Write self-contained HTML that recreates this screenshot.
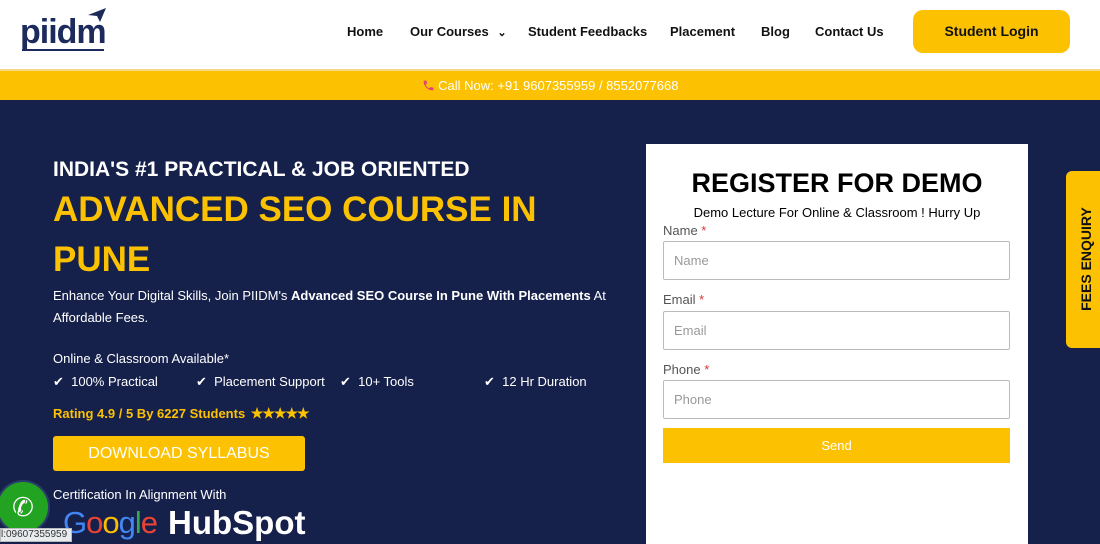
<!DOCTYPE html>
<html><head><style>
*{margin:0;padding:0;box-sizing:border-box}
body{width:1100px;height:540px;overflow:hidden;font-family:"Liberation Sans",sans-serif;background:#16214b;position:relative}
.hdr{position:absolute;top:0;left:0;width:1100px;height:69px;background:#fff}
.nav a{position:absolute;top:24px;font-weight:bold;font-size:13px;color:#111;text-decoration:none}
.login{position:absolute;left:913px;top:10px;width:157px;height:43px;background:#fcc201;border-radius:10px;font-weight:bold;font-size:14px;color:#111;text-align:center;line-height:43px}
.bar{position:absolute;top:69px;left:0;width:1100px;height:31px;background:#fcc201;border-top:2px solid #f5d88a;color:#fff;font-size:13px;text-align:center;line-height:30px}
.t{position:absolute;color:#fff}
.y{color:#fcc201}
.form{position:absolute;left:646px;top:144px;width:382px;height:400px;background:#fff}
.lbl{position:absolute;left:17px;font-size:13px;color:#555}
.lbl b{color:#d33;font-weight:normal}
.inp{position:absolute;left:17px;width:347px;height:39px;border:1px solid #bbb;border-radius:2px;font-size:13px;color:#999;padding:11px 10px}
.fees{position:absolute;left:1066px;top:171px;width:40px;height:177px;background:#fcc201;border-radius:6px 0 0 6px}
.fees span{position:absolute;left:20px;top:88px;transform:translate(-50%,-50%) rotate(-90deg);white-space:nowrap;font-weight:bold;font-size:14px;color:#111}
</style></head><body>
<div class="hdr">
 <div style="position:absolute;left:20px;top:17px;font-weight:bold;font-size:34px;color:#1c2a5c;letter-spacing:-1px;line-height:30px">piidm</div>
 <div style="position:absolute;left:22px;top:49px;width:82px;height:2px;background:#1c2a5c"></div>
 <svg style="position:absolute;left:88px;top:8px" width="18" height="14"><path d="M0 7 L18 0 L12 14 L9 8Z" fill="#1c2a5c"/></svg>
 <div class="nav">
  <a style="left:347px">Home</a><a style="left:410px">Our Courses <span style="font-size:11px;margin-left:5px">⌄</span></a><a style="left:528px">Student Feedbacks</a><a style="left:670px">Placement</a><a style="left:761px">Blog</a><a style="left:815px">Contact Us</a>
 </div>
 <div class="login">Student Login</div>
</div>
<div class="bar"><svg width="13" height="13" viewBox="0 0 24 24" style="vertical-align:-2px"><path d="M6.6 10.8c1.4 2.8 3.8 5.1 6.6 6.6l2.2-2.2c.3-.3.7-.4 1-.2 1.1.4 2.3.6 3.6.6.6 0 1 .4 1 1V20c0 .6-.4 1-1 1C10.6 21 3 13.4 3 4c0-.6.4-1 1-1h3.5c.6 0 1 .4 1 1 0 1.3.2 2.5.6 3.6.1.3 0 .7-.2 1z" fill="#e0407a"/></svg> Call Now: +91 9607355959 / 8552077668</div>
<div class="t" style="left:53px;top:158px;font-size:21px;font-weight:bold">INDIA'S #1 PRACTICAL &amp; JOB ORIENTED</div>
<div class="t y" style="left:53px;top:185px;font-size:35px;font-weight:bold;line-height:50px;width:560px">ADVANCED SEO COURSE IN PUNE</div>
<div class="t" style="left:53px;top:285px;font-size:13px;line-height:22px;width:560px">Enhance Your Digital Skills, Join PIIDM's <b>Advanced SEO Course In Pune With Placements</b> At Affordable Fees.</div>
<div class="t" style="left:53px;top:351px;font-size:13px">Online &amp; Classroom Available*</div>
<div class="t" style="left:53px;top:374px;font-size:13px">✔&nbsp; 100% Practical</div>
<div class="t" style="left:196px;top:374px;font-size:13px">✔&nbsp; Placement Support</div>
<div class="t" style="left:340px;top:374px;font-size:13px">✔&nbsp; 10+ Tools</div>
<div class="t" style="left:484px;top:374px;font-size:13px">✔&nbsp; 12 Hr Duration</div>
<div class="t y" style="left:53px;top:405px;font-size:13px;font-weight:bold">Rating 4.9 / 5 By 6227 Students <span style="font-size:14px;letter-spacing:-1px;margin-left:2px">★★★★★</span></div>
<div style="position:absolute;left:53px;top:436px;width:252px;height:35px;background:#fcc201;border-radius:3px;color:#fff;font-size:16px;text-align:center;line-height:35px">DOWNLOAD SYLLABUS</div>
<div class="t" style="left:53px;top:487px;font-size:13px">Certification In Alignment With</div>
<div style="position:absolute;left:63px;top:503px;font-size:31px;line-height:40px;letter-spacing:-1px"><span style="color:#4285f4">G</span><span style="color:#ea4335">o</span><span style="color:#fbbc05">o</span><span style="color:#4285f4">g</span><span style="color:#34a853">l</span><span style="color:#ea4335">e</span></div>
<div class="t" style="left:168px;top:503px;font-size:33px;font-weight:bold;line-height:40px">HubSpot</div>
<div style="position:absolute;left:-4px;top:480px;width:54px;height:54px;border-radius:50%;background:#22a322;border:2px solid #2b3b6a;color:#fff;font-size:26px;text-align:center;line-height:50px">✆</div>
<div style="position:absolute;left:0;top:528px;width:72px;height:14px;background:#e8ecef;border:1px solid #bbb;font-size:10px;color:#333;line-height:12px">l:09607355959</div>
<div class="form">
 <div style="position:absolute;top:24px;width:100%;text-align:center;font-size:27px;font-weight:bold;color:#000">REGISTER FOR DEMO</div>
 <div style="position:absolute;top:61px;width:100%;text-align:center;font-size:13px;color:#000">Demo Lecture For Online &amp; Classroom ! Hurry Up</div>
 <div class="lbl" style="top:79px">Name <b>*</b></div><div class="inp" style="top:97px">Name</div>
 <div class="lbl" style="top:148px">Email <b>*</b></div><div class="inp" style="top:167px">Email</div>
 <div class="lbl" style="top:218px">Phone <b>*</b></div><div class="inp" style="top:236px">Phone</div>
 <div style="position:absolute;left:17px;top:284px;width:347px;height:35px;background:#fcc201;color:#fff;text-align:center;line-height:35px;font-size:13px">Send</div>
</div>
<div class="fees"><span>FEES ENQUIRY</span></div>
</body></html>
